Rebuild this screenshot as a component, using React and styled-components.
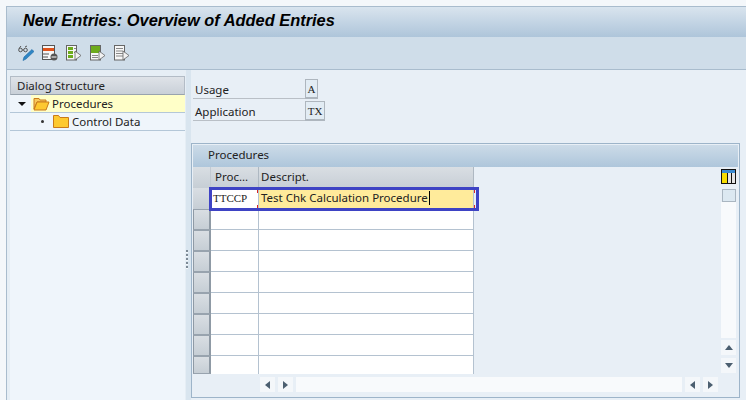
import styled, { createGlobalStyle } from 'styled-components'

const GlobalStyle = createGlobalStyle`
  html, body {
    margin: 0;
    padding: 0;
    background: #ffffff;
  }
  body {
    font-family: "Noto Sans", "Liberation Sans", sans-serif;
    font-size: 11.5px;
    color: #222;
  }
`

const Window = styled.div`
  width: 746px;
  height: 400px;
  box-sizing: border-box;
  padding: 6px 0 0 6px;
  overflow: hidden;
  background: #f4f7fa;
`
const Frame = styled.div`
  height: 394px;
  display: flex;
  flex-direction: column;
  border-left: 1px solid #a9bccd;
  border-top: 1px solid #a9bccd;
`
const TitleBar = styled.div`
  height: 30px;
  flex: none;
  box-sizing: border-box;
  padding: 3px 0 0 16px;
  background: linear-gradient(180deg, #d9e4ee 0%, #aec5da 100%);
  font-family: "Liberation Sans", Arial, sans-serif;
  font-size: 16.4px;
  font-weight: bold;
  font-style: italic;
  line-height: 20px;
  color: #000;
`
const Toolbar = styled.div`
  height: 33px;
  flex: none;
  box-sizing: border-box;
  display: flex;
  align-items: center;
  gap: 8px;
  padding: 0 0 1px 11px;
  background: #cfdde9;
  border-bottom: 1px solid #a9bccd;
`
const ToolIcon = styled.svg`
  width: 16px;
  height: 16px;
  flex: none;
`
const Body = styled.div`
  flex: 1;
  min-height: 0;
  display: flex;
`
const LeftPane = styled.div`
  width: 179px;
  flex: none;
  box-sizing: border-box;
  padding: 6px 1px 0 3px;
  display: flex;
  background: #e6eef5;
`
const TreePanel = styled.div`
  flex: 1;
  min-width: 0;
  background: #eff5fb;
`
const Sash = styled.div`
  width: 5px;
  flex: none;
  box-sizing: border-box;
  padding-top: 180px;
  background: #d9e5ef;
`
const SashDots = styled.div`
  width: 2px;
  height: 20px;
  background: repeating-linear-gradient(180deg, #7d8a96 0 2px, #f6f9fc 2px 3px, transparent 3px 4px);
`
const TreeHead = styled.div`
  height: 19px;
  box-sizing: border-box;
  padding: 1px 0 0 6px;
  line-height: 16px;
  background: linear-gradient(180deg, #dfe3e8, #c9d0d8);
  border: 1px solid #b3bcc6;
  border-bottom-color: #98a3ae;
`
const TreeRow = styled.div`
  height: 18px;
  display: flex;
  align-items: center;
  box-sizing: border-box;
  padding-left: ${(p) => p.$indent}px;
  border-bottom: 1px solid #b4c7d8;
`
const TreeLabel = styled.div`
  flex: 1;
  height: 17px;
  display: flex;
  align-items: center;
  gap: ${(p) => (p.$active ? 2 : 3)}px;
  padding-left: ${(p) => (p.$active ? 2 : 0)}px;
  background: ${(p) => (p.$active ? '#ffffc8' : 'transparent')};
`
const Caret = styled.span`
  width: 0;
  height: 0;
  margin-right: 5px;
  border-left: 4px solid transparent;
  border-right: 4px solid transparent;
  border-top: 4px solid #111;
`
const Bullet = styled.span`
  width: 3px;
  height: 3px;
  border-radius: 50%;
  margin-right: 9px;
  background: #333;
`
const RightPane = styled.div`
  flex: 1;
  min-width: 0;
  display: flex;
  flex-direction: column;
  box-sizing: border-box;
  padding: 7px 0 3px 0;
  background: #e8eff6;
`
const FormRow = styled.div`
  height: 22px;
  margin-left: 2px;
  display: flex;
  align-items: flex-end;
`
const FieldLabel = styled.div`
  width: 112px;
  height: 21px;
  flex: none;
  box-sizing: border-box;
  padding: 4px 0 0 2px;
  line-height: 15px;
  border-bottom: 1px solid #b9bfc6;
`
const FieldValue = styled.div`
  width: ${(p) => p.$w}px;
  height: 20px;
  flex: none;
  box-sizing: border-box;
  display: flex;
  align-items: center;
  justify-content: center;
  font-family: "Liberation Serif", serif;
  font-size: 11px;
  background: #e2ecf4;
  border: 1px solid #aeb6be;
  border-bottom-width: 2px;
`
const TableBox = styled.div`
  margin: 22px 6px 0 0;
  flex: 1;
  min-height: 0;
  display: flex;
  flex-direction: column;
  border: 1px solid #9db4c9;
  padding: 1px 1px 0 1px;
`
const TableTitle = styled.div`
  height: 22px;
  flex: none;
  box-sizing: border-box;
  padding: 2px 0 0 15px;
  line-height: 15px;
  background: linear-gradient(180deg, #ccdbe8, #aec6db);
`
const TableMain = styled.div`
  flex: 1;
  min-height: 0;
  display: flex;
`
const GridArea = styled.div`
  width: 525px;
  flex: none;
  display: flex;
  flex-direction: column;
`
const Grid = styled.div`
  height: 208px;
  flex: none;
  display: flex;
  flex-direction: column;
  width: 281px;
  position: relative;
`
const TableRow = styled.div`
  display: grid;
  grid-template-columns: 18px 48px 215px;
  height: ${(p) => p.$h}px;
  flex: none;
`
const RowButton = styled.div`
  box-sizing: border-box;
  background: linear-gradient(180deg, #d9dee3, #c6ced5);
  border: ${(p) => (p.$flat ? 'none' : '1px solid #98a3ae')};
  border-right: ${(p) => (p.$flat ? '1px solid #c2cad2' : '2px solid #8f9aa5')};
  border-left-color: #8f9aa5;
`
const HeadCell = styled.div`
  box-sizing: border-box;
  padding: 2px 0 0 ${(p) => p.$pad}px;
  line-height: 15px;
  background: linear-gradient(180deg, #d9dee3, #c7ced6);
  border-right: 1px solid #aeb8c2;
`
const Cell = styled.div`
  box-sizing: border-box;
  background: #fff;
  border-right: 1px solid #b4c2d0;
  border-bottom: ${(p) => (p.$last ? 'none' : '1px solid #b4c2d0')};
`
const MonoCell = styled(Cell)`
  padding: 3px 0 0 2px;
  font-family: "Liberation Serif", serif;
  font-size: 11px;
  line-height: 14px;
`
const EditCell = styled(Cell)`
  padding: 2px 0 0 2px;
  line-height: 15px;
  background: #ffeb9b;
`
const TextCaret = styled.span`
  display: inline-block;
  width: 1px;
  height: 14px;
  margin-left: 1px;
  vertical-align: -3px;
  background: #000;
`
const FocusBox = styled.div`
  position: absolute;
  left: 16px;
  top: 20px;
  width: 270px;
  height: 24px;
  box-sizing: border-box;
  border: 3px solid #3e43c4;
  pointer-events: none;
  background:
    linear-gradient(#d22, #d22) 45px 0 / 1px 3px no-repeat,
    linear-gradient(#d22, #d22) 45px 15px / 1px 3px no-repeat,
    linear-gradient(#d22, #d22) 262px 0 / 1px 3px no-repeat,
    linear-gradient(#d22, #d22) 262px 15px / 1px 3px no-repeat;
`
const HScroll = styled.div`
  height: 15px;
  margin-top: 2px;
  padding-left: 67px;
  display: flex;
  align-items: center;
  gap: 3px;
`
const ScrollBtn = styled.div`
  width: 15px;
  height: 15px;
  flex: none;
  display: flex;
  align-items: center;
  justify-content: center;
  background: #f4f7fa;
`
const ScrollTrack = styled.div`
  flex: 1;
  height: 15px;
  background: #f8fafc;
`
const VScroll = styled.div`
  width: 15px;
  flex: none;
  margin-left: 3px;
  padding-top: 2px;
  display: flex;
  flex-direction: column;
`
const ConfigIcon = styled.svg`
  width: 15px;
  height: 15px;
  flex: none;
  display: block;
  margin-bottom: 5px;
`
const Thumb = styled.div`
  height: 13px;
  box-sizing: border-box;
  margin-left: 1px;
  background: #dce8f1;
  border: 1px solid #aab6c1;
`
const VTrack = styled.div`
  height: 136px;
  background: #f8fafc;
  margin-bottom: 2px;
`
const VGap = styled.div`
  height: 3px;
`
const Arrow = styled.span`
  width: 0;
  height: 0;
  border-style: solid;
  border-color: transparent;
  ${(p) => p.$dir === 'left' && 'border-width: 4px 5px 4px 0; border-right-color: #4c5f70;'}
  ${(p) => p.$dir === 'right' && 'border-width: 4px 0 4px 5px; border-left-color: #4c5f70;'}
  ${(p) => p.$dir === 'up' && 'border-width: 0 4px 5px 4px; border-bottom-color: #4c5f70;'}
  ${(p) => p.$dir === 'down' && 'border-width: 5px 4px 0 4px; border-top-color: #4c5f70;'}
`

const OpenFolder = () => (
  <svg width="17" height="14" viewBox="0 0 17 14">
    <path d="M1 12V1.500h5l1 1.500h6v2H4z" fill="#f8c95a" stroke="#c97a1a" />
    <path d="M1 13L4 5h12l-3 8z" fill="#fdc92f" stroke="#c97a1a" />
  </svg>
)

const ClosedFolder = () => (
  <svg width="16" height="14" viewBox="0 0 16 14">
    <path d="M.5 12.500v-12h5l1.500 2h8.500v10z" fill="#fdc92f" stroke="#c97a1a" />
  </svg>
)

const GlassesPencil = () => (
  <ToolIcon viewBox="0 0 16 16">
    <circle cx="2.500" cy="5" r="1.800" fill="none" stroke="#555" />
    <circle cx="7.500" cy="5" r="1.800" fill="none" stroke="#555" />
    <path d="M4.300 5h1.400M1 3.500l2-2.500M7 2l2-1" stroke="#555" fill="none" />
    <path d="M5 15.500l1-3.500 8-7.500 2 2-8 7.500z" fill="#2f86c5" stroke="#1f6aa3" strokeWidth=".6" />
  </ToolIcon>
)

const DeleteRows = () => (
  <ToolIcon viewBox="0 0 16 16">
    <rect x=".5" y=".5" width="12" height="14" fill="#f6f6f6" stroke="#555" />
    <rect x="1" y="3" width="11" height="3" fill="#e0531c" />
    <path d="M1 9h6M1 12h5" stroke="#555" />
    <circle cx="12" cy="12" r="3.500" fill="#555" />
    <path d="M9.500 12h5" stroke="#fff" />
  </ToolIcon>
)

const SelectDoc = ({ fill }) => (
  <ToolIcon viewBox="0 0 16 16">
    <rect x=".5" y=".5" width="10" height="14.500" fill="#f6f6f6" stroke="#666" />
    {fill === 'lines' && <path d="M2 3.500h7M2 6h7M2 8.500h7M2 11h7" stroke="#888" />}
    {fill === 'bars' && (
      <>
        <path d="M2 2h5v3H2zM2 6h5v3H2zM2 10h5v3H2z" fill="#6dab1c" />
        <path d="M8 3.500h2M8 7.500h2" stroke="#888" />
      </>
    )}
    {fill === 'block' && (
      <>
        <rect x="1" y="1" width="9" height="7" fill="#6dab1c" />
        <path d="M2 10.500h6M2 12.500h6" stroke="#888" />
      </>
    )}
    <path d="M9 6l6 4.500L9 15z" fill="#f2f2f2" stroke="#666" strokeWidth=".8" />
  </ToolIcon>
)

const TableConfig = () => (
  <ConfigIcon viewBox="0 0 15 15">
    <rect width="15" height="15" fill="#111" />
    <rect x="1" y="1" width="5" height="13" fill="#f6dc00" />
    <rect x="7" y="1" width="3" height="13" fill="#e4e4e4" />
    <rect x="11" y="1" width="3" height="13" fill="#e4e4e4" />
    <rect x="1" y="1" width="13" height="3" fill="#3a8ad0" />
  </ConfigIcon>
)

const EMPTY_ROWS = [21, 21, 21, 21, 21, 21, 21, 18]

const App = () => (
  <Window>
    <GlobalStyle />
    <Frame>
      <TitleBar>New Entries: Overview of Added Entries</TitleBar>
      <Toolbar>
        <GlassesPencil />
        <DeleteRows />
        <SelectDoc fill="bars" />
        <SelectDoc fill="block" />
        <SelectDoc fill="lines" />
      </Toolbar>
      <Body>
        <LeftPane>
          <TreePanel>
            <TreeHead>Dialog Structure</TreeHead>
            <TreeRow $indent={8}>
              <Caret />
              <TreeLabel $active>
                <OpenFolder />
                Procedures
              </TreeLabel>
            </TreeRow>
            <TreeRow $indent={31}>
              <Bullet />
              <TreeLabel>
                <ClosedFolder />
                Control Data
              </TreeLabel>
            </TreeRow>
          </TreePanel>
        </LeftPane>
        <Sash>
          <SashDots />
        </Sash>
        <RightPane>
          <FormRow>
            <FieldLabel>Usage</FieldLabel>
            <FieldValue $w={13}>A</FieldValue>
          </FormRow>
          <FormRow>
            <FieldLabel>Application</FieldLabel>
            <FieldValue $w={20}>TX</FieldValue>
          </FormRow>
          <TableBox>
            <TableTitle>Procedures</TableTitle>
            <TableMain>
              <GridArea>
                <Grid>
                  <TableRow $h={21}>
                    <RowButton $flat />
                    <HeadCell $pad={4}>Proc...</HeadCell>
                    <HeadCell $pad={2}>Descript.</HeadCell>
                  </TableRow>
                  <TableRow $h={21}>
                    <RowButton $flat />
                    <MonoCell>TTCCP</MonoCell>
                    <EditCell>
                      Test Chk Calculation Procedure
                      <TextCaret />
                    </EditCell>
                  </TableRow>
                  {EMPTY_ROWS.map((h, i) => (
                    <TableRow $h={h} key={i}>
                      <RowButton />
                      <Cell $last={i === EMPTY_ROWS.length - 1} />
                      <Cell $last={i === EMPTY_ROWS.length - 1} />
                    </TableRow>
                  ))}
                  <FocusBox />
                </Grid>
                <HScroll>
                  <ScrollBtn><Arrow $dir="left" /></ScrollBtn>
                  <ScrollBtn><Arrow $dir="right" /></ScrollBtn>
                  <ScrollTrack />
                  <ScrollBtn><Arrow $dir="left" /></ScrollBtn>
                  <ScrollBtn><Arrow $dir="right" /></ScrollBtn>
                </HScroll>
              </GridArea>
              <VScroll>
                <TableConfig />
                <Thumb />
                <VTrack />
                <ScrollBtn><Arrow $dir="up" /></ScrollBtn>
                <VGap />
                <ScrollBtn><Arrow $dir="down" /></ScrollBtn>
              </VScroll>
            </TableMain>
          </TableBox>
        </RightPane>
      </Body>
    </Frame>
  </Window>
)

export default App
